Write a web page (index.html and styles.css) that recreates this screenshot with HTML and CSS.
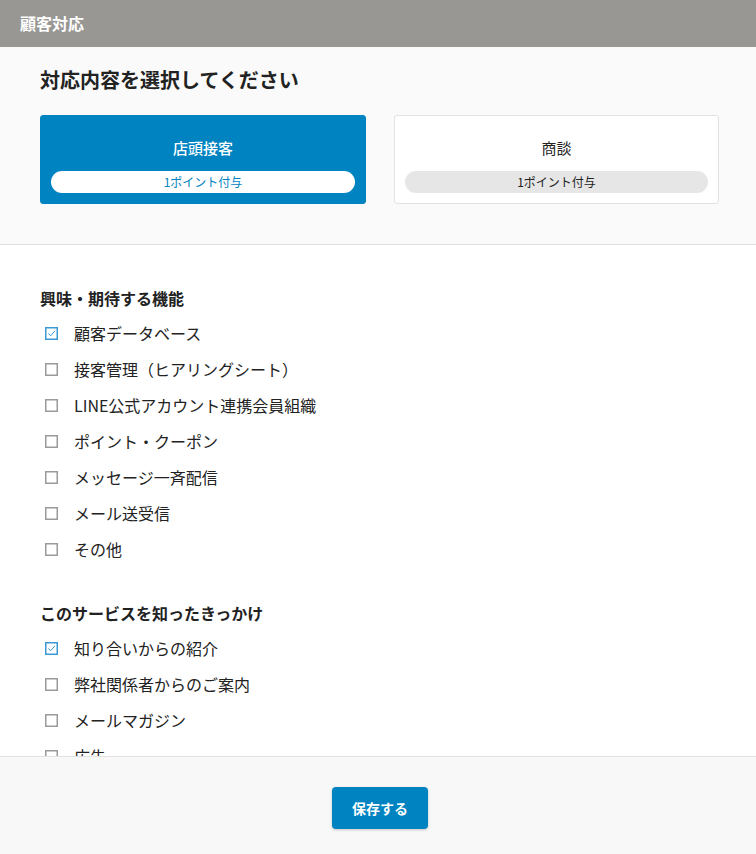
FILE: index.html
```html
<!DOCTYPE html>
<html lang="ja">
<head>
<meta charset="utf-8">
<link rel="stylesheet" href="styles.css">
</head>
<body>
<div class="app">
  <header class="topbar">顧客対応</header>
  <div class="scroll">
    <section class="choose">
      <h1 class="title">対応内容を選択してください</h1>
      <div class="cards">
        <div class="card card-active">
          <div class="card-label">店頭接客</div>
          <div class="pill">1ポイント付与</div>
        </div>
        <div class="card">
          <div class="card-label">商談</div>
          <div class="pill">1ポイント付与</div>
        </div>
      </div>
    </section>
    <section class="form">
      <div class="group">
        <h2 class="group-title">興味・期待する機能</h2>
        <ul class="list">
          <li class="item"><span class="box checked"><svg viewBox="0 0 13 13" width="13" height="13"><rect x="0.75" y="0.75" width="11.5" height="11.5" fill="#fff" stroke="#3b9ad6" stroke-width="1.5"/><path d="M3.3 6.4 L5.6 8.8 L9.9 3.9" fill="none" stroke="#3b9ad6" stroke-width="1"/></svg></span>顧客データベース</li>
          <li class="item"><span class="box"><svg viewBox="0 0 13 13" width="13" height="13"><rect x="0.75" y="0.75" width="11.5" height="11.5" fill="#fff" stroke="#9a9a9a" stroke-width="1.5"/></svg></span>接客管理（ヒアリングシート）</li>
          <li class="item"><span class="box"><svg viewBox="0 0 13 13" width="13" height="13"><rect x="0.75" y="0.75" width="11.5" height="11.5" fill="#fff" stroke="#9a9a9a" stroke-width="1.5"/></svg></span>LINE公式アカウント連携会員組織</li>
          <li class="item"><span class="box"><svg viewBox="0 0 13 13" width="13" height="13"><rect x="0.75" y="0.75" width="11.5" height="11.5" fill="#fff" stroke="#9a9a9a" stroke-width="1.5"/></svg></span>ポイント・クーポン</li>
          <li class="item"><span class="box"><svg viewBox="0 0 13 13" width="13" height="13"><rect x="0.75" y="0.75" width="11.5" height="11.5" fill="#fff" stroke="#9a9a9a" stroke-width="1.5"/></svg></span>メッセージ一斉配信</li>
          <li class="item"><span class="box"><svg viewBox="0 0 13 13" width="13" height="13"><rect x="0.75" y="0.75" width="11.5" height="11.5" fill="#fff" stroke="#9a9a9a" stroke-width="1.5"/></svg></span>メール送受信</li>
          <li class="item"><span class="box"><svg viewBox="0 0 13 13" width="13" height="13"><rect x="0.75" y="0.75" width="11.5" height="11.5" fill="#fff" stroke="#9a9a9a" stroke-width="1.5"/></svg></span>その他</li>
        </ul>
      </div>
      <div class="group">
        <h2 class="group-title">このサービスを知ったきっかけ</h2>
        <ul class="list">
          <li class="item"><span class="box checked"><svg viewBox="0 0 13 13" width="13" height="13"><rect x="0.75" y="0.75" width="11.5" height="11.5" fill="#fff" stroke="#3b9ad6" stroke-width="1.5"/><path d="M3.3 6.4 L5.6 8.8 L9.9 3.9" fill="none" stroke="#3b9ad6" stroke-width="1"/></svg></span>知り合いからの紹介</li>
          <li class="item"><span class="box"><svg viewBox="0 0 13 13" width="13" height="13"><rect x="0.75" y="0.75" width="11.5" height="11.5" fill="#fff" stroke="#9a9a9a" stroke-width="1.5"/></svg></span>弊社関係者からのご案内</li>
          <li class="item"><span class="box"><svg viewBox="0 0 13 13" width="13" height="13"><rect x="0.75" y="0.75" width="11.5" height="11.5" fill="#fff" stroke="#9a9a9a" stroke-width="1.5"/></svg></span>メールマガジン</li>
          <li class="item"><span class="box"><svg viewBox="0 0 13 13" width="13" height="13"><rect x="0.75" y="0.75" width="11.5" height="11.5" fill="#fff" stroke="#9a9a9a" stroke-width="1.5"/></svg></span>広告</li>
          <li class="item"><span class="box"><svg viewBox="0 0 13 13" width="13" height="13"><rect x="0.75" y="0.75" width="11.5" height="11.5" fill="#fff" stroke="#9a9a9a" stroke-width="1.5"/></svg></span>その他</li>
        </ul>
      </div>
    </section>
  </div>
  <footer class="footer">
    <button class="save" type="button">保存する</button>
  </footer>
</div>
</body>
</html>
```

FILE: styles.css
```css
* { box-sizing: border-box; }
html, body { margin: 0; padding: 0; height: 100%; }
body {
  font-family: "Noto Sans CJK JP", "Noto Sans", sans-serif;
  color: #222;
  background: #fff;
}
.app {
  height: 100vh;
  display: flex;
  flex-direction: column;
}
.topbar {
  flex: 0 0 47px;
  background: #999794;
  color: #fff;
  font-size: 16px;
  font-weight: 700;
  line-height: 47px;
  padding-left: 20px;
}
.scroll {
  flex: 1 1 auto;
  overflow: hidden;
  min-height: 0;
}
.choose {
  background: #fafafa;
  border-bottom: 1px solid #e0e0e0;
  padding: 18px 37px 40px 40px;
}
.title {
  margin: 0 0 20px;
  font-size: 20px;
  line-height: 30px;
  font-weight: 700;
  color: #222;
}
.cards {
  display: grid;
  grid-template-columns: 326px 325px;
  column-gap: 28px;
}
.card {
  height: 89px;
  background: #fff;
  border: 1px solid #e2e2e2;
  border-radius: 3px;
  padding: 21px 10px 0;
  display: flex;
  flex-direction: column;
  align-items: stretch;
}
.card-active {
  background: #0083c1;
  border-color: #0083c1;
}
.card-label {
  font-size: 15px;
  line-height: 22px;
  text-align: center;
  color: #222;
  margin-bottom: 12px;
}
.card-active .card-label { color: #fff; font-weight: 500; }
.pill {
  height: 22px;
  border-radius: 11px;
  background: #e6e6e6;
  font-size: 12px;
  line-height: 22px;
  text-align: center;
  color: #222;
}
.card-active .pill {
  background: #fff;
  color: #0083c1;
}
.form {
  padding: 41px 40px 0;
}
.group + .group { margin-top: 34px; }
.group-title {
  margin: 0 0 5px;
  font-size: 16px;
  line-height: 24px;
  font-weight: 700;
  color: #222;
}
.list {
  list-style: none;
  margin: 0;
  padding: 0;
}
.item {
  height: 36px;
  display: flex;
  align-items: center;
  font-size: 16px;
  color: #222;
}
.box {
  display: inline-flex;
  width: 13px;
  height: 13px;
  margin-left: 5px;
  margin-right: 16px;
}
.box svg { display: block; }
.footer {
  flex: 0 0 98px;
  background: #f8f8f8;
  border-top: 1px solid #e2e2e2;
  display: flex;
  justify-content: center;
  padding: 30px 0 0 4px;
}
.save {
  width: 96px;
  height: 42px;
  border: none;
  border-radius: 4px;
  background: #0083c1;
  color: #fff;
  font-family: "Noto Sans CJK JP", "Noto Sans", sans-serif;
  font-size: 14px;
  font-weight: 700;
  box-shadow: 0 1px 3px rgba(0,0,0,0.2);
  cursor: pointer;
}
```
